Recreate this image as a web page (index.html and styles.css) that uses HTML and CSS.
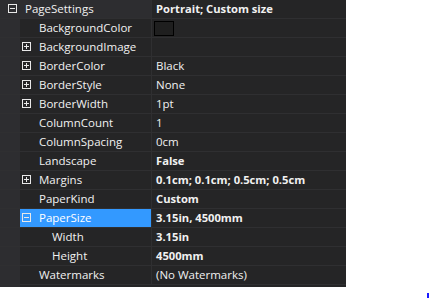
FILE: index.html
```html
<!DOCTYPE html>
<html lang="en">
<head>
    <meta charset="UTF-8">
    <title>Page Settings</title>
    <link rel="stylesheet" href="styles.css">
</head>
<body>

    <!-- Property grid -->
    <div class="grid">
        <div class="row category">
            <div class="gutter"><span class="exp minus"></span></div>
            <div class="name">PageSettings</div>
            <div class="value bold">Portrait; Custom size</div>
        </div>
        <div class="row">
            <div class="gutter"></div>
            <div class="name">BackgroundColor</div>
            <div class="value"><span class="swatch"></span></div>
        </div>
        <div class="row">
            <div class="gutter"></div>
            <div class="name"><span class="exp plus"></span>BackgroundImage</div>
            <div class="value"></div>
        </div>
        <div class="row">
            <div class="gutter"></div>
            <div class="name"><span class="exp plus"></span>BorderColor</div>
            <div class="value">Black</div>
        </div>
        <div class="row">
            <div class="gutter"></div>
            <div class="name"><span class="exp plus"></span>BorderStyle</div>
            <div class="value">None</div>
        </div>
        <div class="row">
            <div class="gutter"></div>
            <div class="name"><span class="exp plus"></span>BorderWidth</div>
            <div class="value">1pt</div>
        </div>
        <div class="row">
            <div class="gutter"></div>
            <div class="name">ColumnCount</div>
            <div class="value">1</div>
        </div>
        <div class="row">
            <div class="gutter"></div>
            <div class="name">ColumnSpacing</div>
            <div class="value">0cm</div>
        </div>
        <div class="row">
            <div class="gutter"></div>
            <div class="name">Landscape</div>
            <div class="value bold">False</div>
        </div>
        <div class="row">
            <div class="gutter"></div>
            <div class="name"><span class="exp plus"></span>Margins</div>
            <div class="value bold">0.1cm; 0.1cm; 0.5cm; 0.5cm</div>
        </div>
        <div class="row">
            <div class="gutter"></div>
            <div class="name">PaperKind</div>
            <div class="value bold">Custom</div>
        </div>
        <div class="row selected">
            <div class="gutter"></div>
            <div class="name"><span class="exp minus"></span>PaperSize</div>
            <div class="value bold">3.15in, 4500mm</div>
        </div>
        <div class="row child">
            <div class="gutter"></div>
            <div class="name">Width</div>
            <div class="value bold">3.15in</div>
        </div>
        <div class="row child">
            <div class="gutter"></div>
            <div class="name">Height</div>
            <div class="value bold">4500mm</div>
        </div>
        <div class="row">
            <div class="gutter"></div>
            <div class="name">Watermarks</div>
            <div class="value">(No Watermarks)</div>
        </div>
    </div>

    <div class="caret"></div>

</body>
</html>
```

FILE: styles.css
```css
/* Global */
body {
    margin: 0;
    background: #fff;
    font-family: "Open Sans", "Noto Sans", sans-serif;
    font-size: 11.5px;
    color: #f1f1f1;
}

/* Property grid */
.grid {
    width: 346px;
    height: 287px;
    background: #252526;
    box-shadow: inset 20px 0 0 #2d2d30;
}

.row {
    display: flex;
    height: 18px;
    border-bottom: 1px solid #2f2f31;
    line-height: 18px;
    white-space: nowrap;
}

.gutter {
    width: 20px;
    flex-shrink: 0;
    background: #2d2d30;
    position: relative;
}

.name {
    width: 132px;
    flex-shrink: 0;
    padding-left: 19px;
    box-sizing: border-box;
    border-right: 1px solid #2f2f31;
    position: relative;
}

.value {
    flex: 1;
    padding-left: 4px;
    display: flex;
    align-items: center;
}

.bold {
    font-weight: bold;
    font-size: 11.2px;
}

.category .name {
    background: #2d2d30;
    padding-left: 5px;
}

.child .name {
    padding-left: 32px;
}

.selected .name {
    background: #3399ff;
    color: #fff;
}

/* Expander boxes */
.exp {
    position: absolute;
    left: 2px;
    top: 4px;
    width: 7px;
    height: 7px;
    border: 1px solid #e8e8e8;
}

.gutter .exp {
    left: 8px;
}

.exp::before,
.plus::after {
    content: "";
    position: absolute;
    background: #e8e8e8;
}

.exp::before {
    left: 1px;
    top: 3px;
    width: 5px;
    height: 1px;
}

.plus::after {
    left: 3px;
    top: 1px;
    width: 1px;
    height: 5px;
}

.swatch {
    width: 18px;
    height: 13px;
    border: 1px solid #000;
    background: #1f1f1f;
    margin-left: -2px;
}

.caret {
    position: absolute;
    left: 427px;
    top: 293px;
    width: 2px;
    height: 5px;
    background: #1a1aff;
}
```
